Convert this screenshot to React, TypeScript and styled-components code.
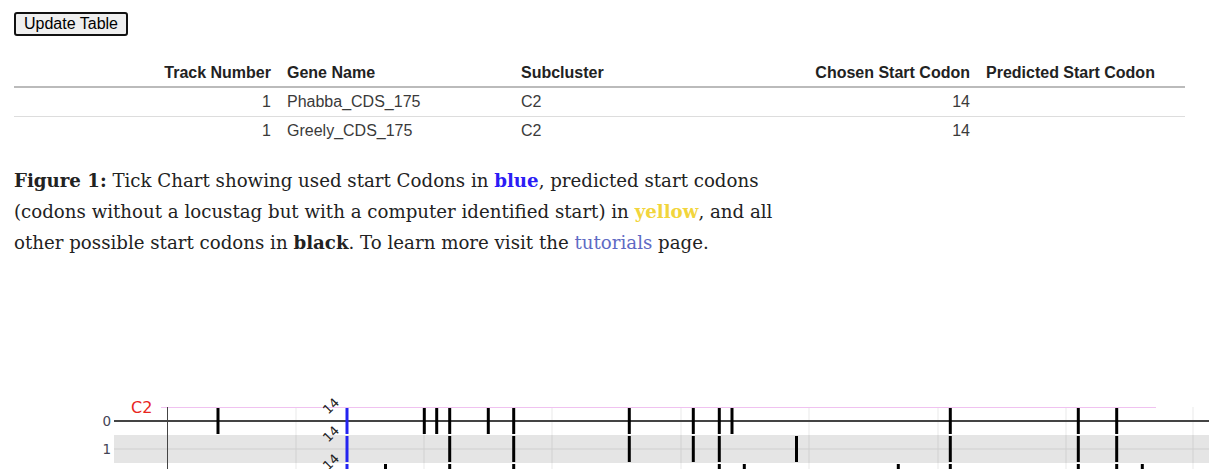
import React from 'react';
import styled, { createGlobalStyle } from 'styled-components';

const GlobalStyle = createGlobalStyle`
  body {
    margin: 0;
    background: #ffffff;
    font-family: "Liberation Sans", Arial, sans-serif;
  }
`;

const Page = styled.div`
  display: flex;
  flex-flow: column;
  padding-top: 12px;
`;

const Section = styled.div`
  margin: 0 32px 0 14px;
`;

const Button = styled.button`
  align-self: flex-start;
  height: 24px;
  padding: 0 8px;
  font-family: "Liberation Sans", Arial, sans-serif;
  font-size: 16px;
  color: #000;
  background: #efefef;
  border: 2px solid #111;
  border-radius: 3px;
`;

const Table = styled.table`
  width: 1171px;
  margin-top: 24px;
  table-layout: fixed;
  border-collapse: collapse;
  font-size: 16px;
  color: #333;
`;

const Th = styled.th<{ $align?: 'left' | 'right'; $w: number }>`
  box-sizing: border-box;
  width: ${(p) => p.$w}px;
  height: 27px;
  padding: 0 8px;
  text-align: ${(p) => p.$align || 'left'};
  font-weight: bold;
  color: #222;
  white-space: nowrap;
  border-bottom: 2px solid #bbb;
`;

const Td = styled.td<{ $align?: 'left' | 'right' }>`
  height: 28px;
  padding: 0 8px;
  text-align: ${(p) => p.$align || 'left'};
  color: #3a3a3a;
`;

const Tr = styled.tr<{ $last?: boolean }>`
  border-bottom: ${(p) => (p.$last ? 'none' : '1px solid #ddd')};
`;

const Caption = styled.p`
  width: 800px;
  margin: 20px 0 0;
  font-family: "DejaVu Serif", "Liberation Serif", serif;
  font-size: 18.2px;
  line-height: 31px;
  color: #222;
`;

const Color = styled.b<{ $c: string }>`
  color: ${(p) => p.$c};
`;

const Link = styled.a`
  color: #5e6ac4;
  text-decoration: none;
`;

const ChartSvg = styled.svg`
  display: block;
  margin-top: 7px;
`;

const columns = [
  { label: 'Track Number', w: 265, align: 'right' as const },
  { label: 'Gene Name', w: 234, align: 'left' as const },
  { label: 'Subcluster', w: 250, align: 'left' as const },
  { label: 'Chosen Start Codon', w: 215, align: 'right' as const },
  { label: 'Predicted Start Codon', w: 207, align: 'left' as const },
];

const genes = [
  { track: 1, name: 'Phabba_CDS_175', sub: 'C2', chosen: 14, predicted: '' },
  { track: 1, name: 'Greely_CDS_175', sub: 'C2', chosen: 14, predicted: '' },
];

const rows = [
  [218, 424.3, 436.7, 449.7, 488.3, 513.7, 629.3, 693.3, 719.3, 732, 950.3, 1078.3, 1116.7],
  [449.7, 513.7, 629.3, 693.3, 719.3, 796.5, 950.3, 1078.3, 1116.7],
  [385.5, 449.7, 513.7, 719.3, 744.3, 898.3, 950.3, 1078.3, 1116.7, 1142.3],
];

const grid = [296, 424, 552, 681, 809, 938, 1066, 1193];
const chosenX = 347;
const top0 = 407;
const rowH = 28;
const labelFont = "'DejaVu Sans', Verdana, sans-serif";

const TickChart: React.FC = () => (
  <ChartSvg width={1217} height={210} viewBox="0 265 1217 210">
    {rows.map((_, i) =>
      i % 2 === 1 ? (
        <rect key={`band${i}`} x={114} y={top0 + i * rowH} width={1095} height={rowH} fill="#e5e5e5" />
      ) : null,
    )}
    {grid.map((x) => (
      <line key={x} x1={x} x2={x} y1={top0} y2={480} stroke="rgba(0,0,0,0.075)" strokeWidth={1.2} />
    ))}
    {rows.map((_, i) =>
      i > 0 ? (
        <line key={`rl${i}`} x1={114} x2={1209} y1={top0 + i * rowH + 14} y2={top0 + i * rowH + 14} stroke="#cfcfcf" />
      ) : null,
    )}
    <line x1={161} x2={1156} y1={407.5} y2={407.5} stroke="#f0c2f0" />
    <line x1={114} x2={1209} y1={421} y2={421} stroke="#444" strokeWidth={2} />
    <line x1={167.5} x2={167.5} y1={407} y2={480} stroke="#444" strokeWidth={1} />
    {rows.map((ticks, i) => {
      const cy = top0 + i * rowH + 14;
      return (
        <g key={`t${i}`}>
          {ticks.map((x) => (
            <line key={x} x1={x} x2={x} y1={cy - 13} y2={cy + 13} stroke="#000" strokeWidth={3} />
          ))}
          <line x1={chosenX} x2={chosenX} y1={cy - 13} y2={cy + 13} stroke="#2424f0" strokeWidth={3} />
          <text
            x={0}
            y={0}
            transform={`translate(331 ${cy - 15}) rotate(-45)`}
            textAnchor="middle"
            dominantBaseline="central"
            fontFamily={labelFont}
            fontSize={13}
            fill="#222"
          >
            14
          </text>
        </g>
      );
    })}
    {['0', '1'].map((t, i) => (
      <text
        key={t}
        x={111}
        y={top0 + i * rowH + 14}
        textAnchor="end"
        dominantBaseline="central"
        fontFamily={labelFont}
        fontSize={13.5}
        fill="#445"
      >
        {t}
      </text>
    ))}
    <text x={131} y={413} fontFamily={labelFont} fontSize={16} fill="#e8251e">
      C2
    </text>
  </ChartSvg>
);

const App: React.FC = () => (
  <Page>
    <GlobalStyle />
    <Section>
      <Button type="button">Update Table</Button>
      <Table>
        <thead>
          <tr>
            {columns.map((c) => (
              <Th key={c.label} $align={c.align} $w={c.w}>
                {c.label}
              </Th>
            ))}
          </tr>
        </thead>
        <tbody>
          {genes.map((g, i) => (
            <Tr key={g.name} $last={i === genes.length - 1}>
              <Td $align="right">{g.track}</Td>
              <Td>{g.name}</Td>
              <Td>{g.sub}</Td>
              <Td $align="right">{g.chosen}</Td>
              <Td>{g.predicted}</Td>
            </Tr>
          ))}
        </tbody>
      </Table>
      <Caption>
        <b>Figure 1:</b> Tick Chart showing used start Codons in <Color $c="#2b1cf5">blue</Color>, predicted
        start codons (codons without a locustag but with a computer identified start) in{' '}
        <Color $c="#f2d53c">yellow</Color>, and all other possible start codons in <b>black</b>. To learn more
        visit the <Link href="#tutorials">tutorials</Link> page.
      </Caption>
    </Section>
    <TickChart />
  </Page>
);

export default App;
